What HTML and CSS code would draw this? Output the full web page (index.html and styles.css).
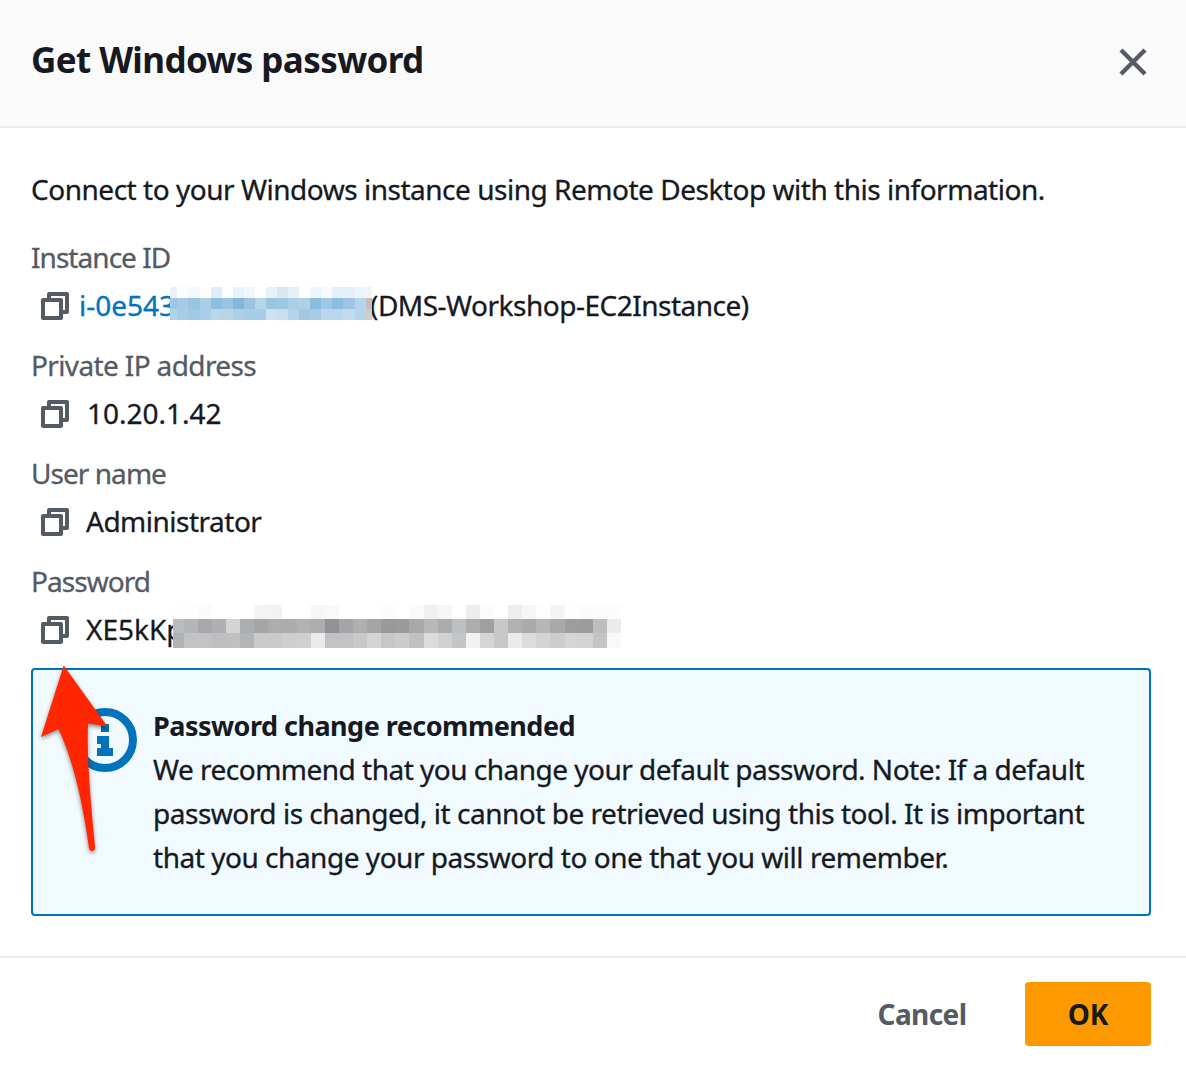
FILE: index.html
```html
<!DOCTYPE html>
<html lang="en">
<head>
<meta charset="utf-8">
<title>Get Windows password</title>
<link rel="stylesheet" href="styles.css">
</head>
<body>
<svg class="defs" aria-hidden="true">
  <symbol id="copy" viewBox="0 0 28 28">
    <path d="M8 6V2H26V20H22M2 8H20V26H2Z" fill="none" stroke="#545b64" stroke-width="4" stroke-linejoin="round"/>
  </symbol>
</svg>
<div class="modal">
  <header class="header">
    <h1 class="title">Get Windows password</h1>
    <svg class="close" viewBox="0 0 28 28"><path d="M2 2L26 26M26 2L2 26" stroke="#545b64" stroke-width="4.4"/></svg>
  </header>
  <main class="body">
    <p class="intro">Connect to your Windows instance using Remote Desktop with this information.</p>
    <section class="field">
      <div class="label label-id">Instance ID</div>
      <div class="value">
        <svg class="copy"><use href="#copy"/></svg>
        <a class="link">i-0e543</a>
        <span class="name">(DMS-Workshop-EC2Instance)</span>
        <svg class="mosaic mosaic-id" viewBox="170 287 202 38" id="mosaic-id"></svg>
      </div>
    </section>
    <section class="field">
      <div class="label label-ip">Private IP address</div>
      <div class="value"><svg class="copy"><use href="#copy"/></svg><span class="text ip">10.20.1.42</span></div>
    </section>
    <section class="field">
      <div class="label label-user">User name</div>
      <div class="value"><svg class="copy"><use href="#copy"/></svg><span class="text user">Administrator</span></div>
    </section>
    <section class="field">
      <div class="label label-pass">Password</div>
      <div class="value">
        <svg class="copy"><use href="#copy"/></svg><span class="text pass">XE5kKp</span>
        <svg class="mosaic mosaic-pass" viewBox="173 605 448 43" id="mosaic-pass"></svg>
      </div>
    </section>
    <section class="alert">
      <svg class="info" viewBox="0 0 64 64">
        <circle cx="32" cy="32" r="28" fill="none" stroke="#0073bb" stroke-width="8"/>
        <path d="M28 16H36V24H28ZM24 28H36V40H40V48H24V40H28V36H24Z" fill="#0073bb"/>
      </svg>
      <div class="alert-text">
        <h2 class="alert-title">Password change recommended</h2>
        <p class="line line-1">We recommend that you change your default password. Note: If a default</p>
        <p class="line line-2">password is changed, it cannot be retrieved using this tool. It is important</p>
        <p class="line line-3">that you change your password to one that you will remember.</p>
      </div>
      <svg class="arrow" viewBox="30 655 90 205">
        <path d="M63.7 665.5L107.5 726.5L88 723.5C86.5 758 91 805 95 847C95.3 852 90 852.5 89 848C83 805 74 762 58.5 729L41 737Z" fill="#ff2600"/>
      </svg>
    </section>
  </main>
  <footer class="footer">
    <button class="button cancel">Cancel</button>
    <button class="button ok">OK</button>
  </footer>
</div>
<script src="mosaic.js"></script>
</body>
</html>
```
FILE: styles.css
```css
* { box-sizing: border-box; }
body { margin: 0; background: #fff; color: #16191f; font: 28px/44px "Noto Sans", "Open Sans", sans-serif; }
h1, h2, p { margin: 0; }
.defs { position: absolute; width: 0; height: 0; }
.modal { width: 1186px; height: 1070px; display: flex; flex-direction: column; white-space: nowrap; }
.header { height: 128px; padding: 38px 39px 0 31px; display: flex; justify-content: space-between; background: #fafafa; border-bottom: 2px solid #eaeded; }
.title { font-size: 35px; line-height: 44px; font-weight: 700; letter-spacing: -0.6px; }
.close { width: 28px; height: 28px; margin-top: 10px; }
.body { height: 828px; padding: 39px 35px 0 31px; -webkit-text-stroke: 0.3px; }
.intro { margin-bottom: 24px; letter-spacing: -0.48px; }
.field { height: 108px; }
.label { color: #545b64; }
.label-id { letter-spacing: -0.95px; }
.label-ip { letter-spacing: -0.63px; }
.label-user { letter-spacing: -0.95px; }
.label-pass { letter-spacing: -0.95px; }
.value { position: relative; height: 44px; margin-top: 4px; padding-left: 10px; display: flex; align-items: center; }
.copy { width: 28px; height: 28px; flex: none; margin-top: 2px; }
.link { width: 291px; margin-left: 10px; color: #0073bb; }
.name { letter-spacing: -0.5px; }
.text { margin-left: 18px; }
.user { margin-left: 17px; letter-spacing: -0.5px; }
.pass { margin-left: 17px; }
.mosaic { position: absolute; shape-rendering: crispEdges; }
.mosaic-id { left: 139px; top: 4px; width: 202px; height: 38px; }
.mosaic-pass { left: 142px; top: -2px; width: 448px; height: 43px; }
.alert { position: relative; height: 248px; margin-top: 1px; padding: 33px 0 0 40px; display: flex; gap: 16px; border: 2px solid #0073bb; border-radius: 4px; background: #f1faff; }
.info { width: 64px; height: 64px; flex: none; margin-top: 5px; }
.alert-title { padding-top: 1px; font-size: 27px; line-height: 43px; font-weight: 700; letter-spacing: -0.52px; -webkit-text-stroke: 0; }
.line-1 { letter-spacing: -0.51px; }
.line-2 { letter-spacing: -0.48px; }
.line-3 { letter-spacing: -0.47px; }
.arrow { position: absolute; left: -3px; top: -15px; width: 90px; height: 205px; overflow: visible; filter: drop-shadow(0 2px 2px rgba(0,0,0,.45)); }
.footer { height: 114px; padding: 24px 35px 0; display: flex; justify-content: flex-end; gap: 18px; border-top: 2px solid #eaeded; }
.button { height: 64px; padding: 0; border: 0; border-radius: 4px; font: 700 28px/64px "Noto Sans", "Open Sans", sans-serif; }
.cancel { width: 170px; background: none; color: #545b64; letter-spacing: -0.6px; }
.ok { width: 126px; background: #ff9900; color: #16191f; }
```
FILE: mosaic.js
```js
function draw(id, rows, xs, ys) {
  const svg = document.getElementById(id);
  rows.forEach((row, r) => row.split(" ").forEach((color, c) => {
    const rect = document.createElementNS("http://www.w3.org/2000/svg", "rect");
    rect.setAttribute("x", xs[c]);
    rect.setAttribute("y", ys[r]);
    rect.setAttribute("width", xs[c + 1] - xs[c]);
    rect.setAttribute("height", ys[r + 1] - ys[r]);
    rect.setAttribute("fill", "#" + color);
    svg.appendChild(rect);
  }));
}

const idX = [170];
for (let i = 0; i < 17; i++) idX.push(Math.round(177.4 + i * 11.07));
idX.push(366, 372);
draw("mosaic-id", [
  "e6f1f9 fbfdfe f4f9fc fefefe dfedf7 fbfdfe e8f2f9 f2f7fc fefefe e6f1f9 d7e8f3 e6f0f8 fefefe eef5fb f8fbfd e6f0f9 e6f0f9 ecf4fb f5f3f3",
  "a0c7e2 a5cae5 98c5e1 abcfe8 8bbedf 98c5e3 82b6da 9cc4e2 b4d6eb 9bc6e1 9dc8e2 abcee6 afd1e7 8bbddf 9fc8e4 8cbcdf 9fc5e2 b3d4ea c4bfbe",
  "b2d4ea a8cee6 a2c9e3 a8cee8 b7d7eb b6d5e9 aed0e7 a8cde7 a8cde6 cce2f2 c9dff0 b6d4e9 a2c8e3 a6cce5 bad7ec bad6eb c0daee b5d5eb d0cccb",
  "ffffff ffffff fcfdfe ffffff ffffff ffffff ffffff ffffff ffffff ffffff fcfdfe fcfdfe ffffff ffffff ffffff ffffff ffffff fdfdfe ffffff"
], idX, [287, 298, 309, 320, 325]);

const passX = [173];
for (let i = 0; i < 32; i++) passX.push(Math.round(183.7 + i * 14.106));
draw("mosaic-pass", [
  "fefefe fefefe fbfbfb ffffff ffffff ffffff f3f3f3 f2f2f2 ffffff ffffff f5f7f6 f8f8f8 ffffff ffffff ffffff fcfcfc ffffff fafafa f0f0f0 f6f6f6 ffffff ededed fcfcfc ffffff eeeeee f6f6f6 fdfdfd f4f4f4 fefefe fbfbfb fcfcfc fcfcfc",
  "babbbc b4b5b6 a8a8aa afb0b1 d4d4d4 acadaf a4a5a7 adadae acacad b0b1b3 acadaf 929397 a5a5a7 afafb0 a4a5a6 99999a 9a9b9c a8a9aa b8b8b9 aaabac bebfc1 acadae 9f9fa0 c8c8c8 b1b1b2 a9aaab b6b7b8 a8a9aa 9d9d9e 9c9c9d bcbdbe ebebeb",
  "b1b2b4 c1c2c3 c1c2c3 bebfc0 bfc0c2 b3b4b6 cacaca c8cacb cecece cfd0d1 ebebeb c2c2c3 c1c2c3 c7c8c9 d4d4d4 c7c7c7 cbccce c1c1c2 dcdcdc d0d1d2 c4c5c6 f2f2f2 d4d5d6 c8c8c9 ebebeb dcdcdc d4d4d4 cccdcf d4d5d4 d3d4d3 c3c4c5 f8f8f8"
], passX, [605, 619, 633, 648]);
```
